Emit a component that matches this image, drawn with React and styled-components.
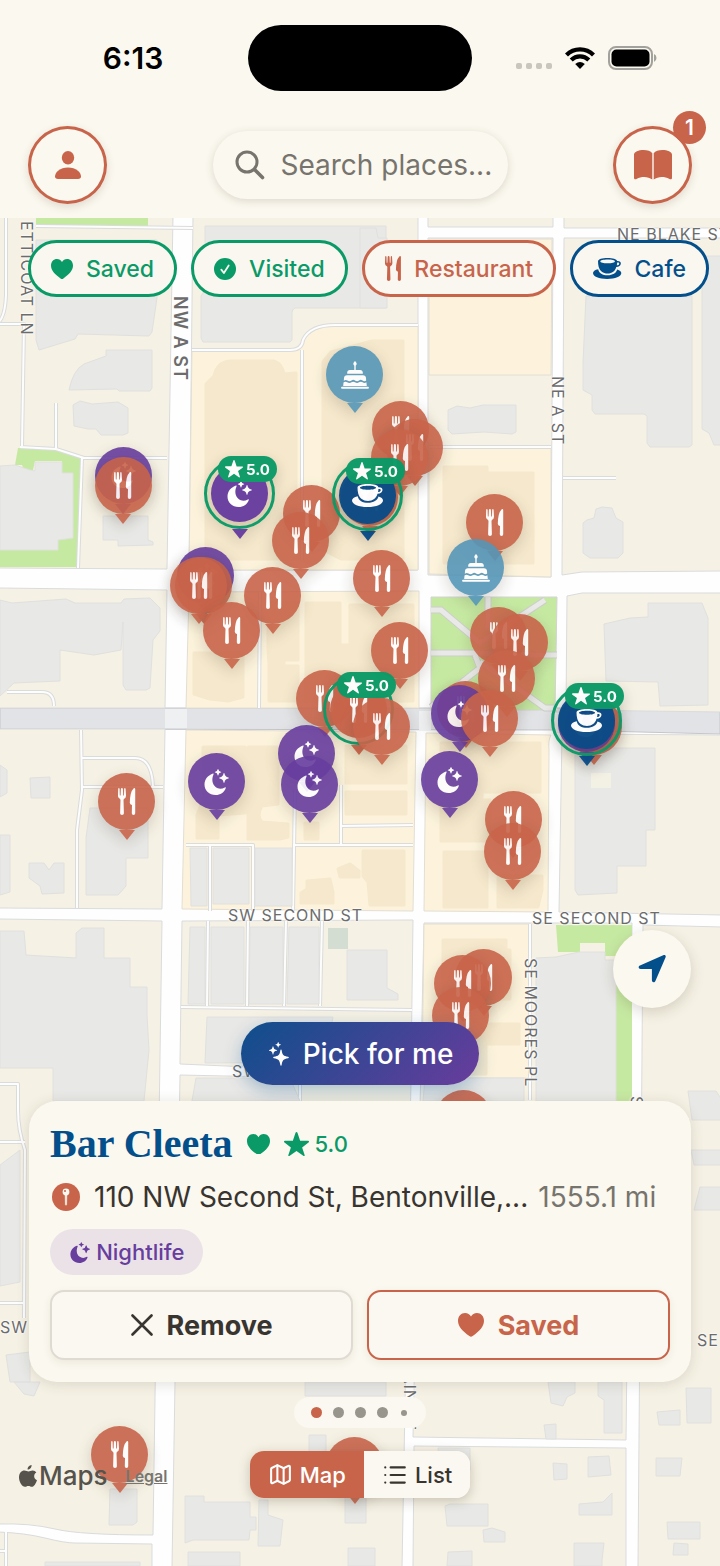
import styled, { createGlobalStyle, css } from 'styled-components';
import { useState } from 'react';
import { List, Map as MapIcon } from 'lucide-react';

const MAP_TOP = 218;
const MAP_WIDTH = 720;
const MAP_HEIGHT = 1348;

const colors = {
  cream: '#fbf8ef',
  clay: '#c8644a',
  green: '#0a9a67',
  navy: '#034f8b',
  purple: '#673d9e',
  blue: '#5596b8',
  ink: '#38342f',
  gray: '#77746e',
};

const pinColors = {
  food: colors.clay,
  night: colors.purple,
  cafe: '#0b4c86',
  cake: colors.blue,
};

const pins = [
  { x: 355, y: 374, kind: 'cake' },
  { x: 401, y: 429, kind: 'food' },
  { x: 415, y: 447, kind: 'food' },
  { x: 400, y: 457, kind: 'food' },
  { x: 124, y: 475, kind: 'night' },
  { x: 124, y: 485, kind: 'food' },
  { x: 240, y: 493, kind: 'night', rating: '5.0' },
  { x: 312, y: 513, kind: 'food' },
  { x: 370, y: 497, kind: 'food' },
  { x: 368, y: 495, kind: 'cafe', rating: '5.0' },
  { x: 301, y: 540, kind: 'food' },
  { x: 495, y: 522, kind: 'food' },
  { x: 476, y: 567, kind: 'cake' },
  { x: 206, y: 575, kind: 'night' },
  { x: 204, y: 585, kind: 'food' },
  { x: 199, y: 585, kind: 'food' },
  { x: 382, y: 578, kind: 'food' },
  { x: 273, y: 595, kind: 'food' },
  { x: 232, y: 630, kind: 'food' },
  { x: 499, y: 635, kind: 'food' },
  { x: 520, y: 642, kind: 'food' },
  { x: 400, y: 650, kind: 'food' },
  { x: 507, y: 678, kind: 'food' },
  { x: 325, y: 698, kind: 'food' },
  { x: 359, y: 709, kind: 'food', rating: '5.0' },
  { x: 466, y: 709, kind: 'food' },
  { x: 460, y: 713, kind: 'night' },
  { x: 490, y: 718, kind: 'food' },
  { x: 594, y: 726, kind: 'food' },
  { x: 587, y: 723, kind: 'night' },
  { x: 587, y: 720, kind: 'cafe', rating: '5.0' },
  { x: 382, y: 726, kind: 'food' },
  { x: 307, y: 753, kind: 'night' },
  { x: 450, y: 779, kind: 'night' },
  { x: 217, y: 781, kind: 'night' },
  { x: 310, y: 784, kind: 'night' },
  { x: 127, y: 801, kind: 'food' },
  { x: 514, y: 819, kind: 'food' },
  { x: 513, y: 851, kind: 'food' },
  { x: 484, y: 977, kind: 'food' },
  { x: 463, y: 983, kind: 'food' },
  { x: 461, y: 1015, kind: 'food' },
  { x: 464, y: 1118, kind: 'food' },
  { x: 120, y: 1454, kind: 'food' },
  { x: 355, y: 1465, kind: 'food' },
];

const streets = [
  { x: 617, y: 225, name: 'NE BLAKE ST' },
  { x: 228, y: 906, name: 'SW SECOND ST' },
  { x: 532, y: 909, name: 'SE SECOND ST' },
  { x: 232, y: 1062, name: 'SW' },
  { x: 0, y: 1318, name: 'SW' },
  { x: 697, y: 1331, name: 'SE' },
  { x: 18, y: 221, name: 'ETTICOAT LN', vertical: true },
  { x: 171, y: 296, name: 'NW A ST', vertical: true, bold: true },
  { x: 549, y: 376, name: 'NE A ST', vertical: true },
  { x: 522, y: 958, name: 'SE MOORES PL', vertical: true },
  { x: 628, y: 1096, name: 'SE', vertical: true },
  { x: 401, y: 1357, name: 'MAIN ST', vertical: true },
];

const percent = (x, y) => ({
  left: `${(x / MAP_WIDTH) * 100}%`,
  top: `${((y - MAP_TOP) / MAP_HEIGHT) * 100}%`,
});

/* ---------- icons ---------- */

const ForkKnife = ({ height = 27 }) => (
  <svg viewBox="0 0 18 27" height={height} fill="currentColor" aria-hidden="true">
    <path d="M.2 1Q.3.1.9.1t.7.9l.2 6.4h.8L2.900 1Q3 .1 3.900.1T4.900 1l.3 6.400H6L6.200 1Q6.300.1 6.900.1t.7.9l.4 6.600Q8.100 10 5.900 11.100L5.500 12l.4 13.300Q5.900 26.900 4 26.900T2.100 25.300L2.500 12l-.4-.9Q-.2 10 0 7.600Z" />
    <path d="M16.300.1Q17.200.1 17.200 1v24.300q0 1.600-1.700 1.600t-1.700-1.600l.2-8.300q-2.200-.5-2.200-2.300Q12 4 15.500.5q.4-.4.8-.4Z" />
  </svg>
);

const MoonStars = ({ height = 26 }) => (
  <svg viewBox="0 0 25 26" height={height} fill="currentColor" aria-hidden="true">
    <path d="M9.500 5.500C7.400 10.300 8.200 15.200 11.600 18c2.800 2.200 6.200 2.100 9.200.4.7-.4 1.200 0 .9.8C20.300 23.200 16.300 26 11.600 26 5.300 26 .5 21.500.5 15.500.5 10.600 3.900 6.200 8.500 4.700c.9-.3 1.300.1 1 .8Z" />
    <path d="M20 4q.4 0 .5.600.4 3.300 3.800 3.800.6.1.6.500t-.6.500q-3.400.5-3.800 3.800-.1.600-.5.600t-.5-.6q-.4-3.300-3.800-3.800-.6-.1-.6-.5t.6-.5q3.400-.5 3.800-3.800.1-.6.500-.6Z" />
    <path d="M14 0q.3 0 .4.500.3 2 2.300 2.300.5.100.5.400t-.5.400q-2 .3-2.300 2.300-.1.500-.4.500t-.4-.5q-.3-2-2.300-2.300-.5-.1-.5-.4t.5-.4q2-.3 2.300-2.300.1-.5.400-.5Z" />
  </svg>
);

const CupSaucer = ({ height = 23 }) => (
  <svg viewBox="0 0 31 23" height={height} fill="none" aria-hidden="true">
    <path fill="currentColor" d="M5.700 12.200C2 12.800 0 14.600 0 16.500 0 20.300 6.700 23 15.500 23S31 20.300 31 16.500c0-1.800-1.700-3.200-4.500-4-1.200 3.900-4.800 6.300-10.500 6.300-5.500 0-9.400-2.200-10.300-6.600Z" />
    <path fill="currentColor" fillRule="evenodd" d="M16 0c5.600 0 10 1.200 10.400 3.200 2.700-.2 4.300.9 4.100 2.900-.2 2.300-2.100 3.700-5 3.700C24.200 14.500 21 16.900 16 16.900S7.500 14.300 6.200 9.500C5.700 7.600 5.500 5.400 5.500 3.600 5.500 1.300 10.200 0 16 0Zm0 1.700c-4.600 0-8 .9-8 2s3.400 2 8 2 8-.9 8-2-3.400-2-8-2Zm10.400 3.400c0 1-.1 2-.3 2.900 1.500 0 2.500-.7 2.600-1.800.1-.9-.8-1.300-2.300-1.100Z" />
  </svg>
);

const Cake = ({ height = 28 }) => (
  <svg viewBox="0 0 28 28" height={height} fill="currentColor" aria-hidden="true">
    <path d="M14 0c1 1.100 1.700 2 1.700 2.800 0 .8-.4 1.400-1 1.600V9h4.500c1.600 0 2.500.9 2.600 2.500v1.300H6.200v-1.300C6.300 9.900 7.200 9 8.800 9h4.500V4.400c-.6-.2-1-.8-1-1.600C12.300 2 13 1.100 14 0Z" />
    <path d="M6 14.200h16c1.800 0 2.800.9 3 2.700l.2 2.500c-1 1.100-2.500 1.100-3.700 0-1.200-.8-2.300-.8-3.500 0-1.200 1-2.700 1-4 0-1.200-.8-2.300-.8-3.500 0-1.200 1-2.700 1-4 0-1.200-.7-2.500-.7-3.700.3l.2-2.800c.2-1.800 1.200-2.700 3-2.700Z" />
    <path d="M2.500 21.500c1.200-1.100 2.500-1.100 3.700-.2 1.400 1 3 1 4.300 0 1.200-.9 2.300-.9 3.500 0 1.300 1 2.800 1 4 0 1.300-.9 2.400-.9 3.600 0 1.200.9 2.500.9 3.800 0l.4 3.700H2.200Z" />
    <path d="M1 25.800h26q.9 0 .9 1t-.9 1H1q-.9 0-.9-1t.9-1Z" />
  </svg>
);

const Heart = ({ width = 22 }) => (
  <svg viewBox="0 0 22 20" width={width} fill="currentColor" aria-hidden="true">
    <path d="M11 20c-.4 0-.9-.3-1.400-.6C3.700 15.500 0 11.300 0 6.600 0 2.700 2.600 0 6 0c2.200 0 3.900 1.100 5 3 1.100-1.900 2.800-3 5-3 3.400 0 6 2.700 6 6.600 0 4.700-3.700 8.900-9.600 12.800-.5.300-1 .6-1.400.6Z" />
  </svg>
);

const Star = ({ width = 16 }) => (
  <svg viewBox="0 0 24 23" width={width} fill="currentColor" aria-hidden="true">
    <path d="M12 0q.7 0 1 .9l2.500 7.600h7.600q.8 0 .9.600.1.600-.5 1.100l-6.100 4.600 2.400 7.300q.2.700-.2 1-.5.200-1.100-.2L12 18.300l-6.500 4.600q-.6.400-1.100.2-.4-.3-.2-1l2.400-7.300L.5 10.200q-.6-.5-.5-1.100.1-.6.900-.6h7.600L11 .9q.3-.9 1-.9Z" />
  </svg>
);

const CheckBadge = () => (
  <svg viewBox="0 0 22 22" width="22" aria-hidden="true">
    <circle cx="11" cy="11" r="11" fill="currentColor" />
    <path d="m7.300 11.600 2.600 3.400 4.800-7.600" fill="none" stroke={colors.cream} strokeWidth="1.800" strokeLinecap="round" strokeLinejoin="round" />
  </svg>
);

const Person = () => (
  <svg viewBox="0 0 26 28" width="26" fill="currentColor" aria-hidden="true">
    <ellipse cx="13" cy="6.700" rx="6.200" ry="6.700" />
    <path d="M3 28c-2 0-3-.8-3-2.400C0 21.500 5 16.600 13 16.600s13 4.900 13 9c0 1.600-1 2.400-3 2.400Z" />
  </svg>
);

const Magnifier = () => (
  <svg viewBox="0 0 30 30" width="30" fill="none" stroke="currentColor" strokeWidth="3" strokeLinecap="round" aria-hidden="true">
    <circle cx="12" cy="12" r="10" />
    <path d="m19.500 19.500 8 8" strokeWidth="3.600" />
  </svg>
);

const Cross = () => (
  <svg viewBox="0 0 22 22" width="22" fill="none" stroke="currentColor" strokeWidth="2.600" strokeLinecap="round" aria-hidden="true">
    <path d="m1.500 1.500 19 19M20.500 1.500l-19 19" />
  </svg>
);

const Book = () => (
  <svg viewBox="0 0 38 30" width="38" fill="currentColor" aria-hidden="true">
    <path d="M18.300 3.300v26.200c-2.400-1.700-5-2.600-8.100-2.600-2.800 0-5 .5-7.700 2.100C1.200 29.700 0 29.200 0 27.700V4.600C0 2 4.600 0 9.600 0c3.900 0 7.100 1.100 8.700 3.300ZM19.700 3.300v26.200c2.400-1.700 5-2.600 8.100-2.600 2.800 0 5 .5 7.700 2.100 1.300.7 2.500.2 2.500-1.300V4.600C38 2 33.400 0 28.400 0c-3.900 0-7.100 1.100-8.700 3.300Z" />
  </svg>
);

const Sparkles = () => (
  <svg viewBox="0 0 20 24" width="20" fill="currentColor" aria-hidden="true">
    <path d="M12 7.600q.6 0 .7.900c.6 4.300 1.800 5.600 6.300 6.300q.8.100.8.700t-.8.700c-4.500.7-5.700 2-6.300 6.600q-.1.900-.7.900t-.7-.9c-.6-4.600-1.800-5.900-6.300-6.600q-.8-.1-.8-.7t.8-.7c4.500-.7 5.700-2 6.300-6.300q.1-.9.700-.9Z" />
    <path d="M4 4.200q.3 0 .4.500c.4 2.200 1 2.800 3.300 3.200q.5.100.5.400t-.5.400c-2.300.4-2.900 1-3.300 3.300q-.1.500-.4.500t-.4-.5C3.200 9.700 2.600 9.100.3 8.700q-.5-.1-.5-.4t.5-.4c2.300-.4 2.900-1 3.300-3.200q.1-.5.400-.5ZM9.200 0q.2 0 .3.300c.3 1.500.7 1.900 2.200 2.200q.3.100.3.300t-.3.300c-1.500.3-1.900.7-2.200 2.200q-.1.300-.3.300t-.3-.3c-.3-1.500-.7-1.900-2.200-2.200q-.3-.1-.3-.3t.3-.3C8.200 2.200 8.600 1.800 8.900.3q.1-.3.300-.3Z" />
  </svg>
);

const LocationArrow = () => (
  <svg viewBox="0 0 28 28" width="28" fill="currentColor" aria-hidden="true">
    <path d="M25.200.3c1.800-.8 3.100.4 2.300 2.300L17.400 26c-.8 2-3.500 1.600-3.500-.7V14.700c0-.5-.1-.6-.6-.6H2.700c-2.300 0-2.800-2.600-.7-3.500Z" />
  </svg>
);

const PinBadge = () => (
  <svg viewBox="0 0 28 28" width="28" aria-hidden="true">
    <circle cx="14" cy="14" r="14" fill={colors.clay} />
    <circle cx="14" cy="9" r="3.400" fill={colors.cream} />
    <circle cx="13" cy="8" r="1" fill={colors.clay} />
    <path d="M13.200 11.500h1.600l-.2 10q-.6 1.600-1.200 0Z" fill={colors.cream} stroke={colors.cream} strokeWidth=".6" />
  </svg>
);

const AppleLogo = () => (
  <svg viewBox="0 0 18 22" width="18" fill="currentColor" aria-hidden="true">
    <path d="M12.600 0c.2 2.300-1.700 4.600-4 4.600C8.300 2.500 10.300.2 12.600 0ZM17.300 7.600c-3.200 1.900-2.600 6.300.7 7.600-.9 2.900-3 6.600-5.100 6.600-1.300 0-1.900-.8-3.500-.8s-2.200.8-3.500.8C3 21.800 0 16.700 0 12.500c0-4.500 2.700-7 5.400-7 1.700 0 2.800 1 4.100 1s2.200-1 4.300-1c1.400 0 2.700.8 3.500 2.100Z" />
  </svg>
);

const Wifi = () => (
  <svg viewBox="0 0 30 22" width="30" aria-hidden="true">
    <path d="M1.500 8a19 19 0 0 1 27 0M6.200 13a12.500 12.500 0 0 1 17.600 0" fill="none" stroke="#000" strokeWidth="4.200" />
    <path d="m15 22-4.800-4.900q4.800-4 9.600 0Z" />
  </svg>
);

const Battery = () => (
  <svg viewBox="0 0 49 24" width="49" aria-hidden="true">
    <rect x="1" y="1" width="43" height="22" rx="7" fill="none" stroke="#a3a19b" strokeWidth="2" />
    <rect x="3.500" y="3.500" width="38" height="17" rx="5" />
    <path d="M46 8q2.500 1.200 2.500 4T46 16Z" fill="#a3a19b" />
  </svg>
);

const pinIcons = { food: ForkKnife, night: MoonStars, cafe: CupSaucer, cake: Cake };

/* ---------- street map drawing ---------- */

const lanes =
  'M6 218V295Q5 320-4 324M-4 324H24L22 446M20 447L56 449L84 458H167M56 403V448M82 458L78 568' +
  'M193 228L36 226M7 692H42Q54 692 54 706M81 730L82 790L77 830V908M82 758H135Q152 758 153 787M82 787H163' +
  'M260 592L259 708M186 845H253V911M210 845V911M295 790L293 911M341 785V845M341 826L413 825M293 845H413' +
  'M302 350V560M192 350H290Q302 350 303 340Q310 325 335 325H418M429 447H551M563 478H616' +
  'M208 921L207 1006M248 921L247 1006M286 921L284 1006M322 921L320 1006M181 1007L412 1010M530 924V1100' +
  'M0 1084H18V1110Q18 1130 25 1150L24 1318M0 1142H25M0 1303H25M300 1078V1101M6 1532V1566M0 1551H6';

const parkPaths =
  'M431 610H441L480 643L545 600M488 597V630M431 653H475L530 655H557' +
  'M475 655L480 668L452 690L431 707M480 662L520 690L545 708H557';

const StreetMap = () => (
  <MapDrawing viewBox={`0 ${MAP_TOP} ${MAP_WIDTH} ${MAP_HEIGHT}`} preserveAspectRatio="none" aria-hidden="true">
    <rect x="0" y="218" width="720" height="1348" fill="#fefefe" />
    <path d="M0 708H720V734L560 730L0 729Z" fill="#e2e3e6" stroke="#c4c6ca" />

    {/* residential blocks */}
    <g fill="#f5f1e4" stroke="#dadbdd" strokeWidth="1">
      <path d="M-2 216H173L167 569L-2 568Z" />
      <path d="M193 216H418V570H189Z" />
      <path d="M428 216H553V227H428ZM564 216H722V228H564Z" />
      <path d="M428 238H553L551 577L428 575Z" />
      <path d="M564 238H722V571L582 572L562 575Z" />
      <path d="M-2 588L167 590L165 708H-2Z" />
      <path d="M567 596L582 593H722V712L566 710Z" />
      <path d="M-2 729H165L162 909L-2 908Z" />
      <path d="M562 734L722 735V915L559 912Z" />
      <path d="M-2 919L162 921L153 1535Q80 1535 55 1529T-2 1524Z" />
      <path d="M-2 1532Q25 1533 45 1538T75 1543L152 1544V1568H-2Z" />
      <path d="M182 921L413 920L411 1074L180 1064Z" />
      <path d="M180 1075L411 1080L402 1568H172Z" />
      <path d="M424 923H632L626 1440L413 1437Z" />
      <path d="M414 1446L626 1448V1568H413Z" />
      <path d="M643 925L722 927V1568H638Z" />
    </g>

    {/* commercial blocks */}
    <g fill="#fdf3dc" stroke="#e2ded4">
      <path d="M192 350H290Q302 350 303 340Q310 325 335 325H418V570H189Z" />
      <path d="M429 239H552L551 375H429ZM429 447H551L551 577L429 574Z" />
      <path d="M189 592L419 591V708H186Z" />
      <path d="M186 730L416 732L413 911L182 909Z" />
      <path d="M426 733L551 735Q548 740 549 750L548 912L424 911Z" />
      <path d="M424 924H530V1078H422Z" />
    </g>

    {/* green areas */}
    <g fill="#c6e9a2">
      <path d="M36 218H148V226H36ZM18 448L55 448L82 458L77 567L0 567V550H58V539L73 538V475L62 473V461H35L33 470L24 470L22 465H15Z" />
      <path d="M556 925H632V1101H616V956H605V943H580V952H558Z" />
      <path d="M431 597H557L555 710H431Z" stroke="#d3d4d2" />
    </g>
    <path d={parkPaths} fill="none" stroke="#cccfca" strokeWidth="7" />
    <path d={parkPaths} fill="none" stroke="#e9e9e7" strokeWidth="5" />

    {/* driveways */}
    <path d={lanes} fill="none" stroke="#dadbdd" strokeWidth="4" strokeLinejoin="round" />
    <path d={lanes} fill="none" stroke="#fdfdfc" strokeWidth="2" strokeLinejoin="round" />

    {/* buildings */}
    <g fill="#e8e8e6" stroke="#e0e0de" strokeWidth="1" strokeLinejoin="round">
      <path d="M36 240H157V298L152 332L149 336L78 334L75 339L39 350L36 340Z" />
      <path d="M106 350H152V388L150 391H119L117 389L69 390Q73 370 84 364L106 356Z" />
      <path d="M73 405L80 401L92 404L118 402L128 408V433L123 435H101L96 429H88L74 426Z" />
      <path d="M0 466L15 465L30 470L35 471V462H62V473H73V538L58 540V550H0Z" />
      <path d="M103 516H148V540L153 542V545L118 546V540H103Z" />
      <path d="M205 226H386V308H295Q292 309 292 313V340L290 342H203L201 338V296L205 290Z" />
      <path d="M360 228H376L378 238H387V308H360Z" />
      <path d="M448 410L457 406L470 408L483 405H516V432L512 434L484 432L452 434L448 430Z" />
      <path d="M586 296H692V445L689 447H650L647 443V416L644 414H595L592 410V395L583 390V363Z" />
      <path d="M702 256H722V445H714L709 433L702 429Z" />
      <path d="M583 523L587 520L594 518L596 509L602 507L612 508L616 518L623 522V553L618 558H590L583 553Z" />
      <path d="M0 600L12 603L66 599L75 603H121L124 599L150 598L160 608V631L153 640L150 688L146 690H126L123 685V622L121 650L94 655L60 650V681L14 683L0 696Z" />
      <path d="M604 624L630 618L648 617V603H702L708 618V705L660 706L658 682L606 681Z" />
      <path d="M0 765L7 770V793L0 797ZM30 778L50 777V798H31ZM0 835H10V892L0 895ZM29 863H44L49 870L54 863H64V893L42 894L40 886L29 878Z" />
      <path d="M90 808H148V858H126V886L118 895H86V838Z" />
      <path d="M575 748H655V830H646V866H617V893L578 895L575 890Z" />
      <path d="M0 931H24L26 955L76 958V933L82 928H104V958H130V987H147V1015L149 1050L144 1101H53V1068H0Z" />
      <path d="M190 848H207V906H191ZM213 848H249V904H213ZM255 848H292V906H255Z" />
      <path d="M190 927H205V1004H188ZM211 927H244V1004H211ZM250 927H283V1004H249ZM289 927H319V1004H287Z" />
      <path d="M207 1017H333L325 1062L205 1063ZM196 1078H290L300 1101H192Z" />
      <path d="M347 950H387V988L398 994V1000H347Z" />
      <path d="M425 1078H524V1101H423Z" />
      <path d="M536 958L556 957L579 952H605V960H616V1101H536Z" />
      <path d="M688 1091H716L722 1100V1120H692ZM691 1150H722V1165H694ZM700 1187H722V1210H694Z" />
      <path d="M305 1382H386V1396H305ZM14 1382H40L34 1396L24 1394ZM0 1165L20 1150V1282L0 1286ZM6 1355L30 1352V1382H10Z" />
      <path d="M110 1489H137V1522L133 1525H109ZM45 1562H140V1566H45Z" />
      <path d="M185 1496H204V1502H250V1517H256V1530H250L249 1540H193L185 1543ZM259 1500H268V1515L283 1520L280 1546H258ZM188 1552H240V1566H188Z" />
      <path d="M309 1435H326V1455H309ZM345 1493H366V1523H345ZM348 1548H375V1566H348Z" />
      <path d="M445 1506L450 1504H488V1526H447ZM483 1530L492 1528L505 1532V1542H484ZM448 1552L472 1551V1566H447Z" />
      <path d="M548 1382H575V1393L567 1397L563 1406L551 1403ZM598 1382H622V1433H604V1400L598 1396ZM544 1425L556 1424V1439H546ZM657 1412L680 1410V1425H659ZM686 1388H711V1423H687Z" />
      <path d="M553 1463L567 1464V1479L554 1480ZM588 1457L609 1456L611 1475L588 1477ZM656 1458H682L680 1476H656ZM579 1504L603 1502L612 1493V1515H579ZM574 1543H604L602 1560V1566H574ZM667 1522H700V1539H668ZM674 1543L688 1544V1555H673Z" />
      <path d="M438 1448H470V1470H440Z" />
    </g>
    <g fill="#f5e8cc" stroke="#f5e8cc" strokeWidth="3" strokeLinejoin="round">
      <path d="M206 384L214 376Q217 362 230 361H274Q282 364 284 374L296 373V559H206Z" />
      <path d="M323 362L331 352L372 341H403V559H341L323 550Z" />
      <path d="M444 467H487V473H533V563H444Z" />
      <path d="M194 653H243V697L228 701L210 699L194 694ZM268 603H298V660H284V666H298V701H269V664L268 650ZM306 603H340V645H350V605H413V701H306Z" />
      <path d="M203 747H245V813L218 815V838H197V815L203 800ZM248 747H278V804L262 806Q256 816 262 822L288 824V837L280 839H248Z" />
      <path d="M346 746H406V783H346ZM346 792H406V814H346ZM305 823H318V839H305Z" />
      <path d="M307 881L330 879L333 892V903H301V893L307 889ZM338 869L350 864L359 871V877H340ZM363 851H404V905H370L368 882L363 876Z" />
      <path d="M441 743H540V792H482V800H490V841H441ZM444 852H487V907H444ZM498 876H542V890L538 907H498Z" />
      <path d="M443 940H506V950H510V999H443ZM486 1024H519V1044H486V1074H441V1016H486Z" />
    </g>
    <path d="M328 928H348V949H328Z" fill="#d3ddd2" />
    <path d="M591 773h20v15h-20Z" fill="#f5f1e4" opacity=".8" />
    <path d="M165 709h22v19h-22ZM419 711h12v20h-12ZM555 713h11v20h-11Z" fill="#eff0f2" />
  </MapDrawing>
);

/* ---------- pieces ---------- */

const Pin = ({ x, y, kind, rating }) => {
  const Icon = pinIcons[kind];
  return (
    <PinStyled style={percent(x, y)} $rated={!!rating} aria-label={kind}>
      <PinHead $color={pinColors[kind]}>
        <Icon />
      </PinHead>
      {rating && <PinRing />}
      <PinTip $color={pinColors[kind]} />
      {rating && (
        <PinRating>
          <Star width={18} />
          {rating}
        </PinRating>
      )}
    </PinStyled>
  );
};

const filters = [
  { name: 'Saved', color: colors.green, icon: <Heart /> },
  { name: 'Visited', color: colors.green, icon: <CheckBadge /> },
  { name: 'Restaurant', color: colors.clay, icon: <ForkKnife height={25} /> },
  { name: 'Cafe', color: colors.navy, icon: <CupSaucer height={21} /> },
];

const App = () => {
  const [view, setView] = useState('map');
  const [query, setQuery] = useState('');

  return (
    <Screen>
      <GlobalStyle />
      <Header>
        <StatusBar>
          <Time>6:13</Time>
          <Island />
          <StatusIcons>
            <Signal><i /><i /><i /><i /></Signal>
            <Wifi />
            <Battery />
          </StatusIcons>
        </StatusBar>
        <TopBar>
          <RoundButton aria-label="Profile"><Person /></RoundButton>
          <SearchBox>
            <Magnifier />
            <SearchInput
              aria-label="Search places"
              placeholder="Search places..."
              value={query}
              onChange={(e) => setQuery(e.target.value)}
            />
          </SearchBox>
          <RoundButton aria-label="Guides">
            <Book />
            <Count>1</Count>
          </RoundButton>
        </TopBar>
      </Header>

      <MapArea>
        <MapCanvas>
          <StreetMap />
          {streets.map((street, i) => (
            <StreetName
              key={i}
              style={percent(street.x, street.y)}
              $vertical={street.vertical}
              $bold={street.bold}
            >
              {street.name}
            </StreetName>
          ))}
          {pins.map((pin, i) => (
            <Pin key={i} {...pin} />
          ))}
          <Attribution style={percent(19, 1461)}>
            <AppleLogo />
            <span>Maps</span>
            <a href="#legal">Legal</a>
          </Attribution>
        </MapCanvas>

        <Filters>
          {filters.map((filter) => (
            <Chip key={filter.name} $color={filter.color}>
              {filter.icon}
              {filter.name}
            </Chip>
          ))}
        </Filters>

        <BottomStack>
          <LocateButton aria-label="My location"><LocationArrow /></LocateButton>
          <PickButton><Sparkles />Pick for me</PickButton>
          <PlaceCard>
            <TitleRow>
              <PlaceName>Bar Cleeta</PlaceName>
              <Heart width={23} />
              <Score><Star width={25} />5.0</Score>
            </TitleRow>
            <AddressRow>
              <PinBadge />
              <Address>110 NW Second St, Bentonville,...</Address>
              <Distance>1555.1 mi</Distance>
            </AddressRow>
            <Tag><MoonStars height={21} />Nightlife</Tag>
            <Actions>
              <ActionButton><Cross />Remove</ActionButton>
              <ActionButton $active><Heart width={26} />Saved</ActionButton>
            </Actions>
          </PlaceCard>
          <Dots>
            <Dot $active />
            <Dot />
            <Dot />
            <Dot />
            <Dot $small />
          </Dots>
          <Toggle>
            <ToggleButton $active={view === 'map'} onClick={() => setView('map')}>
              <MapIcon size={25} strokeWidth={2} />Map
            </ToggleButton>
            <ToggleButton $active={view === 'list'} onClick={() => setView('list')}>
              <List size={26} strokeWidth={2} />List
            </ToggleButton>
          </Toggle>
        </BottomStack>
      </MapArea>
    </Screen>
  );
};

const GlobalStyle = createGlobalStyle`
  * {
    box-sizing: border-box;
  }
  body {
    margin: 0;
    background: ${colors.cream};
    font-family: Inter, "Liberation Sans", sans-serif;
    color: ${colors.ink};
  }
  button, input {
    font-family: inherit;
    margin: 0;
    padding: 0;
  }
  button {
    cursor: pointer;
  }
  svg {
    flex: none;
    display: block;
  }
`;

const Screen = styled.div`
  display: flex;
  flex-direction: column;
  min-height: 100vh;
`;

const Header = styled.header`
  background: ${colors.cream};
`;

const StatusBar = styled.div`
  display: grid;
  grid-template-columns: 1fr 224px 1fr;
  align-items: center;
  padding-top: 25px;
`;

const Time = styled.div`
  padding-left: 18px;
  text-align: center;
  font-weight: 600;
  font-size: 30px;
  color: #000;
`;

const Island = styled.div`
  height: 66px;
  border-radius: 33px;
  background: #000;
`;

const StatusIcons = styled.div`
  display: flex;
  align-items: center;
  justify-content: flex-end;
  gap: 13px;
  padding-right: 63px;
`;

const Signal = styled.div`
  display: flex;
  gap: 4px;
  padding-top: 16px;

  i {
    width: 6px;
    height: 6px;
    border-radius: 2px;
    background: #c9c6be;
  }
`;

const TopBar = styled.div`
  display: flex;
  align-items: center;
  justify-content: space-between;
  padding: 35px 28px 14px;
`;

const RoundButton = styled.button`
  position: relative;
  display: flex;
  align-items: center;
  justify-content: center;
  width: 79px;
  height: 78px;
  border: 3px solid ${colors.clay};
  border-radius: 50%;
  background: ${colors.cream};
  color: ${colors.clay};
  box-shadow: 0 3px 9px rgba(60, 50, 30, 0.15);
`;

const Count = styled.span`
  position: absolute;
  top: -18px;
  right: -17px;
  width: 33px;
  height: 33px;
  border-radius: 50%;
  background: ${colors.clay};
  color: #fff;
  font-weight: 600;
  font-size: 21px;
  line-height: 33px;
`;

const SearchBox = styled.label`
  display: flex;
  align-items: center;
  gap: 16px;
  width: 295px;
  height: 68px;
  padding: 0 12px 0 22px;
  border-radius: 34px;
  background: ${colors.cream};
  color: ${colors.gray};
  box-shadow: 0 2px 8px rgba(60, 50, 30, 0.16);
`;

const SearchInput = styled.input`
  flex: 1;
  min-width: 0;
  border: none;
  outline: none;
  background: none;
  color: ${colors.ink};
  font-size: 28px;

  &::placeholder {
    color: ${colors.gray};
    opacity: 1;
  }
`;

const MapArea = styled.main`
  position: relative;
  flex: 1;
  display: flex;
  flex-direction: column;
  overflow: hidden;
`;

const MapCanvas = styled.div`
  position: absolute;
  inset: 0;
`;

const MapDrawing = styled.svg`
  width: 100%;
  height: 100%;
`;

const StreetName = styled.span`
  position: absolute;
  color: #6c6c6c;
  font-size: 16px;
  line-height: 18px;
  letter-spacing: 1px;
  white-space: nowrap;
  text-shadow: 0 0 2px #fff, 0 0 2px #fff, 0 0 3px #fff;
  ${({ $vertical }) => $vertical && css`writing-mode: vertical-rl;`}
  ${({ $bold }) => $bold && css`
    font-size: 18px;
    font-weight: 600;
  `}
`;

const Attribution = styled.div`
  position: absolute;
  display: flex;
  align-items: center;
  gap: 2px;
  color: #55534c;
  font-weight: 500;
  font-size: 26px;
  line-height: 30px;

  a {
    margin-left: 16px;
    color: #77756e;
    font-weight: 600;
    font-size: 16px;
  }
`;

const PinStyled = styled.button`
  position: absolute;
  display: flex;
  flex-direction: column;
  align-items: center;
  width: 57px;
  margin: -28px 0 0 -29px;
  border: none;
  background: none;
  opacity: ${({ $rated }) => ($rated ? 0.97 : 0.9)};
  filter: drop-shadow(0 5px 8px rgba(60, 50, 30, 0.22));

  & > div + i {
    margin-top: ${({ $rated }) => ($rated ? 7 : 0)}px;
  }
`;

const PinHead = styled.span`
  display: flex;
  align-items: center;
  justify-content: center;
  width: 57px;
  height: 57px;
  border-radius: 50%;
  background: ${({ $color }) => $color};
  color: #fff;
`;

const PinRing = styled.div`
  position: absolute;
  top: -7px;
  left: -7px;
  width: 71px;
  height: 71px;
  border: 3px solid ${colors.green};
  border-radius: 50%;
`;

const PinTip = styled.i`
  width: 0;
  height: 0;
  border: 8px solid transparent;
  border-top: 10px solid ${({ $color }) => $color};
  border-bottom: none;
`;

const PinRating = styled.span`
  position: absolute;
  top: -9px;
  left: 7px;
  display: flex;
  align-items: center;
  gap: 3px;
  height: 26px;
  padding: 0 7px;
  border-radius: 13px;
  background: ${colors.green};
  color: #fff;
  font-weight: 700;
  font-size: 15px;
`;

const Filters = styled.nav`
  position: relative;
  display: flex;
  gap: 14px;
  padding: 22px 10px 0 28px;
`;

const Chip = styled.button`
  display: flex;
  align-items: center;
  gap: 13px;
  height: 57px;
  padding: 0 20px;
  border: 3px solid ${({ $color }) => $color};
  border-radius: 29px;
  background: #faf7f1;
  color: ${({ $color }) => $color};
  font-weight: 500;
  font-size: 23px;
  white-space: nowrap;
`;

const BottomStack = styled.div`
  position: relative;
  display: flex;
  flex-direction: column;
  align-items: center;
  margin-top: auto;
  padding: 0 29px 68px;
  pointer-events: none;

  & > * {
    pointer-events: auto;
  }
`;

const LocateButton = styled.button`
  display: flex;
  align-items: center;
  justify-content: center;
  align-self: flex-end;
  width: 78px;
  height: 78px;
  border: none;
  border-radius: 50%;
  background: ${colors.cream};
  color: ${colors.navy};
  box-shadow: 0 4px 14px rgba(60, 50, 30, 0.18);
`;

const PickButton = styled.button`
  display: flex;
  align-items: center;
  gap: 14px;
  height: 63px;
  margin-top: 14px;
  padding: 0 26px 0 28px;
  border: none;
  border-radius: 32px;
  background: linear-gradient(135deg, #0d4f8c, #693c9c);
  color: #fff;
  font-weight: 500;
  font-size: 28px;
  box-shadow: 0 6px 18px rgba(3, 79, 139, 0.3);
`;

const PlaceCard = styled.section`
  align-self: stretch;
  margin-top: 16px;
  padding: 20px 21px 22px;
  border-radius: 28px;
  background: ${colors.cream};
  box-shadow: 0 2px 14px rgba(60, 50, 30, 0.14);
`;

const TitleRow = styled.div`
  display: flex;
  align-items: center;
  gap: 14px;
  height: 46px;
  color: ${colors.green};
`;

const PlaceName = styled.h1`
  margin: 0;
  color: ${colors.navy};
  font-family: "Liberation Serif", serif;
  font-weight: 700;
  font-size: 40px;
  line-height: 46px;
`;

const Score = styled.span`
  display: flex;
  align-items: center;
  gap: 6px;
  font-weight: 500;
  font-size: 22px;
`;

const AddressRow = styled.div`
  display: flex;
  align-items: center;
  height: 36px;
  margin-top: 12px;
  padding-left: 2px;
  font-size: 28px;
`;

const Address = styled.span`
  margin: 0 10px 0 14px;
  overflow: hidden;
  text-overflow: ellipsis;
  white-space: nowrap;
`;

const Distance = styled.span`
  color: ${colors.gray};
  white-space: nowrap;
`;

const Tag = styled.div`
  display: inline-flex;
  align-items: center;
  gap: 6px;
  height: 46px;
  margin-top: 14px;
  padding: 0 18px 0 20px;
  border-radius: 23px;
  background: #ebe2e8;
  color: ${colors.purple};
  font-weight: 500;
  font-size: 22px;
`;

const Actions = styled.div`
  display: flex;
  gap: 14px;
  margin-top: 15px;
`;

const ActionButton = styled.button`
  flex: 1;
  display: flex;
  align-items: center;
  justify-content: center;
  gap: 14px;
  height: 70px;
  border: 2px solid ${({ $active }) => ($active ? colors.clay : '#dfdbd3')};
  border-radius: 14px;
  background: #fbf7f1;
  color: ${({ $active }) => ($active ? colors.clay : colors.ink)};
  font-weight: 700;
  font-size: 27px;
  box-shadow: 0 3px 8px rgba(60, 50, 30, 0.08);
`;

const Dots = styled.div`
  display: flex;
  align-items: center;
  gap: 11px;
  height: 31px;
  margin-top: 15px;
  padding: 0 17px;
  border-radius: 16px;
  background: #faf8f0;
`;

const Dot = styled.i`
  width: ${({ $small }) => ($small ? 6 : 11)}px;
  height: ${({ $small }) => ($small ? 6 : 11)}px;
  margin: ${({ $small }) => ($small ? '0 2px' : 0)};
  border-radius: 50%;
  background: ${({ $active }) => ($active ? colors.clay : '#98958d')};
`;

const Toggle = styled.div`
  display: flex;
  margin-top: 23px;
  border-radius: 14px;
  overflow: hidden;
  background: #fbf7f1;
  box-shadow: 0 3px 12px rgba(60, 50, 30, 0.25);
`;

const ToggleButton = styled.button`
  display: flex;
  align-items: center;
  gap: 7px;
  height: 47px;
  padding: 0 18px;
  border: none;
  background: ${({ $active }) => ($active ? colors.clay : '#fbf7f1')};
  color: ${({ $active }) => ($active ? '#fff' : colors.ink)};
  font-weight: 500;
  font-size: 22px;
`;

export default App;
